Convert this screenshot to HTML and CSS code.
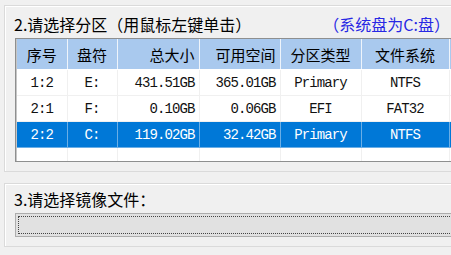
FILE: index.html
```html
<!DOCTYPE html>
<html>
<head>
<meta charset="utf-8">
<link rel="stylesheet" href="styles.css">
</head>
<body>
<div class="group group-part">
  <div class="title">
    <span>2.请选择分区（用鼠标左键单击）</span>
    <span class="hint">（系统盘为C:盘）</span>
  </div>
  <div class="listview">
    <table class="grid">
      <colgroup>
        <col class="c1"><col class="c2"><col class="c3"><col class="c4"><col class="c5"><col class="c6"><col class="c7">
      </colgroup>
      <thead>
        <tr>
          <th class="ctr">序号</th>
          <th class="ctr">盘符</th>
          <th class="rt">总大小</th>
          <th class="rt">可用空间</th>
          <th class="ctr">分区类型</th>
          <th class="ctr">文件系统</th>
          <th></th>
        </tr>
      </thead>
      <tbody>
        <tr>
          <td class="ctr">1:2</td><td class="ctr">E:</td><td class="rt">431.51GB</td><td class="rt">365.01GB</td><td class="ctr">Primary</td><td class="ctr">NTFS</td><td></td>
        </tr>
        <tr>
          <td class="ctr">2:1</td><td class="ctr">F:</td><td class="rt">0.10GB</td><td class="rt">0.06GB</td><td class="ctr">EFI</td><td class="ctr">FAT32</td><td></td>
        </tr>
        <tr class="sel">
          <td class="ctr">2:2</td><td class="ctr">C:</td><td class="rt">119.02GB</td><td class="rt">32.42GB</td><td class="ctr">Primary</td><td class="ctr">NTFS</td><td></td>
        </tr>
        <tr>
          <td></td><td></td><td></td><td></td><td></td><td></td><td></td>
        </tr>
      </tbody>
    </table>
  </div>
</div>
<div class="group group-image">
  <div class="title2">3.请选择镜像文件：</div>
  <div class="combo"><div class="focus"></div></div>
</div>
</body>
</html>
```
FILE: styles.css
```css
html, body {
  margin: 0;
  padding: 0;
  background: #f0f0f0;
  overflow: hidden;
  font-family: "Noto Sans CJK SC", "Noto Sans", sans-serif;
  color: #000;
  text-spacing-trim: space-all;
}

.group {
  margin-left: 4px;
  width: 470px;
  border: 1px solid #dadada;
  box-shadow: inset 1px 1px 0 #ffffff;
  box-sizing: border-box;
}

.group-part {
  margin-top: 5px;
  height: 167px;
}

.title {
  width: 436px;
  margin-left: 9px;
  padding-top: 4px;
  height: 28px;
  line-height: 28px;
  font-size: 16px;
  display: flex;
  justify-content: space-between;
  white-space: nowrap;
}

.hint {
  color: #2828e4;
}

.listview {
  margin-left: 10px;
  margin-top: 0;
  height: 124px;
  width: 460px;
  border: 1px solid #8e8f8f;
  border-right: none;
  box-shadow: inset 1px 1px 0 #c6c6c6;
  background: #fff;
  box-sizing: border-box;
  overflow: hidden;
}

.grid {
  border-collapse: collapse;
  table-layout: fixed;
  width: 520px;
  margin-left: 1px;
  margin-top: 0;
}

.c1 { width: 50px; }
.c2 { width: 50px; }
.c3 { width: 82px; }
.c4 { width: 81px; }
.c5 { width: 81px; }
.c6 { width: 88px; }
.c7 { width: 88px; }

.grid th {
  height: 30px;
  padding: 0 4px;
  background: #a9c9ee;
  font-weight: normal;
  font-size: 15px;
  border-right: 1px solid #eef4fb;
  border-bottom: 1px solid #ffffff;
  white-space: nowrap;
  overflow: hidden;
}

.grid td {
  height: 25px;
  padding: 0 4px;
  font-family: "Liberation Mono", monospace;
  font-size: 14px;
  letter-spacing: -0.9px;
  border-right: 1px solid #f0f0f0;
  border-bottom: 1px solid #f0f0f0;
  white-space: nowrap;
  overflow: hidden;
  color: #111;
}

.grid .ctr { text-align: center; }
.grid .rt { text-align: right; }

.grid tr.sel td {
  background: #0078d7;
  color: #fff;
  border-right: 1px solid #6aaee6;
  border-bottom: 1px solid #6aaee6;
}

.group-image {
  margin-top: 11px;
  height: 64px;
}

.title2 {
  margin-left: 9px;
  margin-top: 3px;
  height: 24px;
  line-height: 24px;
  font-size: 16px;
}

.combo {
  margin-left: 10px;
  margin-top: 2px;
  height: 24px;
  width: 460px;
  background: #e1e1e1;
  border: 1px solid #adadad;
  box-sizing: border-box;
  padding: 2px;
}

.focus {
  height: 100%;
  border: 1px dotted #444;
  border-right: none;
  box-sizing: border-box;
}
```
